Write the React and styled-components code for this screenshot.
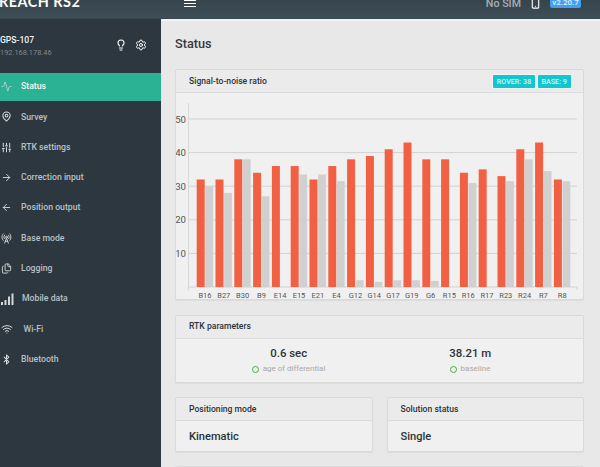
import React from "react";
import styled, { createGlobalStyle } from "styled-components";
import { Activity, MapPin, SlidersVertical, ArrowRight, ArrowLeft, RadioTower, Files, Wifi, Bluetooth, Lightbulb, Settings, Smartphone } from "lucide-react";

const Global = createGlobalStyle`
  html, body { margin: 0; padding: 0; background: #e8e8e8; }
  * { box-sizing: border-box; }
`;

const Page = styled.div`
  width: 600px; height: 467px; overflow: hidden; display: flex; flex-direction: column;
  font-family: Roboto, "Liberation Sans", sans-serif; background: #e8e8e8;
`;
const TopBar = styled.header`
  height: 19px; flex: none; display: flex; align-items: flex-start;
  background: linear-gradient(#36444c, #3f4f57); border-bottom: 1px solid #39464e; overflow: hidden;
`;
const Brand = styled.div`
  width: 184px; flex: none; margin-left: -1px; margin-top: -7px; color: #fff;
  font: 700 14.4px/17px Lato, sans-serif; letter-spacing: 0.5px; white-space: nowrap;
`;
const Burger = styled.div`
  width: 12px; height: 7px; flex: none; margin-top: 0; margin-left: 1px;
  border-top: 1px solid #fff; border-bottom: 1px solid #fff; position: relative;
  &::before { content: ""; display: block; height: 1px; background: #fff; margin-top: 2px; }
`;
const TopRight = styled.div`
  margin-left: auto; display: flex; align-items: flex-start; padding-right: 19px;
`;
const Sim = styled.span`
  font: 500 10.7px/7px Roboto, sans-serif; color: #a4aeb3; margin-right: 9px; white-space: nowrap;
`;
const PhoneIcon = styled.span`
  display: flex; margin-top: -2px; margin-right: 9px; color: #fff;
`;
const Version = styled.span`
  width: 31px; height: 8px; background: #42a0ee; color: #dff0ff; border-radius: 0 0 2px 2px;
  font: 500 8px/6px Roboto, sans-serif; text-align: center; overflow: hidden;
`;
const Body = styled.div`
  flex: 1; display: flex; min-height: 0;
`;
const Sidebar = styled.aside`
  width: 161px; flex: none; background: #2d3740; display: flex; flex-direction: column;
`;
const Profile = styled.div`
  height: 52.5px; flex: none; display: flex; align-items: flex-start; padding-top: 15px; color: #fff;
`;
const ProfileText = styled.div`
  width: 115px; flex: none;
`;
const DeviceName = styled.div`
  font: 500 8.6px/12px Roboto, sans-serif; color: #f2f4f5;
`;
const DeviceIp = styled.div`
  font: 400 7.4px/10px Roboto, sans-serif; color: #7f8990; margin-top: 2px;
`;
const ProfileIcons = styled.div`
  display: flex; gap: 8px; margin-top: 5px; color: #fff;
`;
const Nav = styled.nav`
  display: flex; flex-direction: column;
`;
const Item = styled.div`
  height: 30.3px; flex: none; display: flex; align-items: center; position: relative;
  color: ${p => (p.$active ? "#f4f8f7" : "#b9c0c4")};
  background: ${p => (p.$active ? "#2bb193" : "transparent")};
  border-top: ${p => (p.$active ? "1px solid #2d3740" : "0")};
  border-bottom: ${p => (p.$active ? "1px solid #2d3740" : "0")};
  font: 500 8.7px/1 Roboto, sans-serif;
`;
const IconSlot = styled.span`
  width: ${p => p.$w || 21}px; flex: none; display: flex; justify-content: flex-start; padding-left: 0.5px; color: #d4d9db;
`;
const Main = styled.main`
  flex: 1; min-width: 0; padding: 0 16px 0 14px; display: flex; flex-direction: column; gap: 14.5px;
  border-top: 2px solid #f3f3f3;
`;
const Title = styled.h1`
  margin: 0; height: 33.5px; flex: none; padding-top: 15px; font: 500 12.7px/16px Roboto, sans-serif; color: #333b40;
`;
const Card = styled.section`
  background: #f0f0f0; border: 1px solid #dadada; border-radius: 2px; box-shadow: 0 1px 1px #dcdcdc; flex: none;
`;
const CardHead = styled.div`
  height: 23px; background: #ebebeb; border-bottom: 1px solid #dcdcdc; display: flex; align-items: center;
  justify-content: space-between; padding: 0 12.5px 0 13px;
`;
const CardTitle = styled.h2`
  margin: 0; font: 500 8.6px/1 Roboto, sans-serif; color: #2c3338;
`;
const Badges = styled.div`
  display: flex; gap: 3px;
`;
const Badge = styled.span`
  height: 13px; padding: 0 3.6px; background: #10c6cf; color: #d9f5f6; border-radius: 1px; box-shadow: 0 0 0 1px #f4f4f4;
  font: 500 7.2px/13px Roboto, sans-serif; white-space: nowrap;
`;
const ChartBody = styled.div`
  height: 206px; display: flex; overflow: hidden;
`;
const Params = styled.div`
  height: 43px; display: grid; grid-template-columns: 1fr 1fr; padding: 6px 22px 0;
`;
const Param = styled.div`
  display: flex; flex-direction: column; align-items: center;
`;
const ParamValue = styled.div`
  font: 500 11.4px/16px Roboto, sans-serif; color: #2c3338;
`;
const ParamLabel = styled.div`
  font: 400 8px/12px Roboto, sans-serif; color: #a9a9a9; margin-top: 2.5px; display: flex; align-items: center; gap: 3.5px;
  &::before { content: ""; width: 5px; height: 5px; border: 1.7px solid #43ad46; border-radius: 50%; }
`;
const Columns = styled.div`
  display: grid; grid-template-columns: 1fr 1fr; gap: 14px; flex: none;
`;
const ModeValue = styled.div`
  height: 29.5px; padding: 2px 0 0 13px; display: flex; align-items: center; font: 500 11.1px/1 Roboto, sans-serif; color: #2c3338;
`;

const sats = [
  ["B16", 32, 30], ["B27", 32, 28], ["B30", 38, 38], ["B9", 34, 27], ["E14", 36, 0],
  ["E15", 36, 33.5], ["E21", 32, 33.5], ["E4", 36, 31.5], ["G12", 38, 2], ["G14", 39, 1.5],
  ["G17", 41, 2], ["G19", 43, 2], ["G6", 38, 1.8], ["R15", 38, 0], ["R16", 34, 31],
  ["R17", 35, 0], ["R23", 33, 31.5], ["R24", 41, 38], ["R7", 43, 34.5], ["R8", 32, 31.5],
];
const ORIGIN_Y = 287 - 93;
const UNIT = 3.36;
const AXIS_X = 188.5 - 176;

function Chart() {
  return (
    <svg width="407" height="206" viewBox="0 0 407 206" role="img" aria-label="Signal-to-noise ratio">
      {[10, 20, 30, 40, 50].map(v => (
        <g key={v}>
          <line x1={AXIS_X} x2="401" y1={ORIGIN_Y - v * UNIT} y2={ORIGIN_Y - v * UNIT} stroke="#d2d2d2" strokeWidth="1" />
          <text x={AXIS_X - 2.5} y={ORIGIN_Y - v * UNIT + 3.5} textAnchor="end" fontFamily="Roboto" fontSize="9.6" fill="#555">{v}</text>
        </g>
      ))}
      <line x1={AXIS_X} x2={AXIS_X} y1="10" y2={ORIGIN_Y + 3} stroke="#d8d8d8" />
      <line x1={AXIS_X} x2="401" y1={ORIGIN_Y} y2={ORIGIN_Y} stroke="#d2d2d2" />
      <line x1="401" x2="401" y1={ORIGIN_Y} y2={ORIGIN_Y + 3} stroke="#d2d2d2" />
      {sats.map(([name, r, b], i) => {
        const x = 20.7 + i * 18.8;
        return (
          <g key={name}>
            <rect x={x} y={ORIGIN_Y - r * UNIT} width="8" height={r * UNIT} fill="#f26044" />
            {b > 0 && <rect x={x + 8.6} y={ORIGIN_Y - b * UNIT} width="7.8" height={b * UNIT} fill="#d0d0d0" />}
            <text x={x + 8.3} y={ORIGIN_Y + 11} textAnchor="middle" fontFamily="Roboto" fontSize="7.5" fill="#555">{name}</text>
          </g>
        );
      })}
    </svg>
  );
}

function SignalBars() {
  return (
    <svg width="13" height="12" viewBox="0 0 13 12" fill="#d4d9db" aria-hidden="true">
      <rect x="0" y="9" width="2" height="3" />
      <rect x="3.5" y="7" width="2" height="5" />
      <rect x="7" y="3.5" width="2" height="8.5" />
      <rect x="10.5" y="0.5" width="2" height="11.5" />
    </svg>
  );
}

const nav = [
  ["Status", <Activity size={11} strokeWidth={1.5} />, 21, true],
  ["Survey", <MapPin size={11} strokeWidth={2.2} />, 21],
  ["RTK settings", <SlidersVertical size={11} strokeWidth={2.2} />, 21],
  ["Correction input", <ArrowRight size={11} strokeWidth={2} />, 21],
  ["Position output", <ArrowLeft size={11} strokeWidth={2} />, 21],
  ["Base mode", <RadioTower size={11} strokeWidth={2} />, 21],
  ["Logging", <Files size={11} strokeWidth={2} />, 21],
  ["Mobile data", <SignalBars />, 22],
  ["Wi-Fi", <Wifi size={12} strokeWidth={2} />, 23.5],
  ["Bluetooth", <Bluetooth size={11} strokeWidth={2.2} />, 21],
];

export default function App() {
  return (
    <Page>
      <Global />
      <TopBar>
        <Brand>REACH RS2</Brand>
        <Burger />
        <TopRight>
          <Sim>No SIM</Sim>
          <PhoneIcon><Smartphone size={11} strokeWidth={2.4} /></PhoneIcon>
          <Version>v2.20.7</Version>
        </TopRight>
      </TopBar>
      <Body>
        <Sidebar>
          <Profile>
            <ProfileText>
              <DeviceName>GPS-107</DeviceName>
              <DeviceIp>192.168.178.46</DeviceIp>
            </ProfileText>
            <ProfileIcons>
              <Lightbulb size={12} strokeWidth={2.2} />
              <Settings size={12} strokeWidth={2} />
            </ProfileIcons>
          </Profile>
          <Nav>
            {nav.map(([label, icon, w, active]) => (
              <Item key={label} $active={active}>
                <IconSlot $w={w}>{icon}</IconSlot>
                {label}
              </Item>
            ))}
          </Nav>
        </Sidebar>
        <Main>
          <Title>Status</Title>
          <Card>
            <CardHead>
              <CardTitle>Signal-to-noise ratio</CardTitle>
              <Badges>
                <Badge>ROVER: 38</Badge>
                <Badge>BASE: 9</Badge>
              </Badges>
            </CardHead>
            <ChartBody><Chart /></ChartBody>
          </Card>
          <Card>
            <CardHead><CardTitle>RTK parameters</CardTitle></CardHead>
            <Params>
              <Param><ParamValue>0.6 sec</ParamValue><ParamLabel>age of differential</ParamLabel></Param>
              <Param><ParamValue>38.21 m</ParamValue><ParamLabel>baseline</ParamLabel></Param>
            </Params>
          </Card>
          <Columns>
            <Card>
              <CardHead><CardTitle>Positioning mode</CardTitle></CardHead>
              <ModeValue>Kinematic</ModeValue>
            </Card>
            <Card>
              <CardHead><CardTitle>Solution status</CardTitle></CardHead>
              <ModeValue>Single</ModeValue>
            </Card>
          </Columns>
          <Card><CardHead /></Card>
        </Main>
      </Body>
    </Page>
  );
}
